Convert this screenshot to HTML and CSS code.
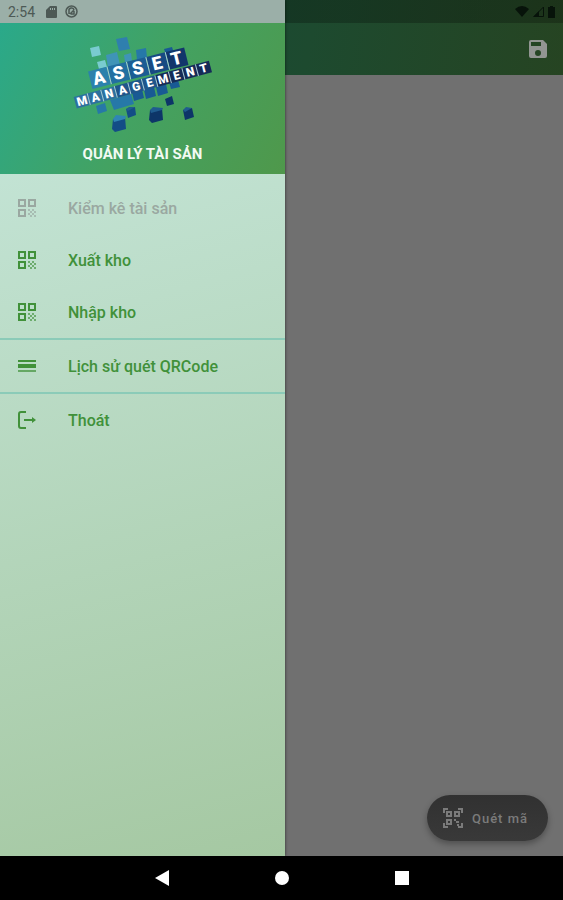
FILE: index.html
```html
<!DOCTYPE html>
<html lang="vi">
<head>
    <meta charset="UTF-8"/>
    <meta name="viewport" content="width=device-width, initial-scale=1.0"/>
    <title>Quản lý tài sản</title>
    <link rel="stylesheet" href="styles.css">
</head>
<body>
<!-- shared icons -->
<svg class="defs" width="0" height="0" aria-hidden="true">
    <symbol id="qr" viewBox="0 0 18 18">
        <g fill="none" stroke="currentColor" stroke-width="2">
            <rect x="1" y="1" width="6" height="6"/>
            <rect x="11" y="1" width="6" height="6"/>
            <rect x="1" y="11" width="6" height="6"/>
        </g>
        <path opacity=".65" fill="currentColor" d="M10 10h2v2h-2zM14 10h2v2h-2zM12 12h2v2h-2zM16 12h2v2h-2zM10 14h2v2h-2zM14 14h2v2h-2zM12 16h2v2h-2zM16 16h2v2h-2z"/>
    </symbol>
</svg>

<div class="stage">
    <!-- page behind the drawer -->
    <main class="page">
        <header class="app-bar">
            <button class="save" aria-label="Lưu">
                <svg width="18" height="18" viewBox="0 0 18 18">
                    <path fill="currentColor" fill-rule="evenodd" d="M2 0h12l4 4v12a2 2 0 0 1-2 2H2a2 2 0 0 1-2-2V2a2 2 0 0 1 2-2zM2 2v4h10V2zM9 10a3 3 0 1 0 0 6a3 3 0 0 0 0-6z"/>
                </svg>
            </button>
        </header>
        <button class="scan">
            <svg width="20" height="20" viewBox="0 0 20 20" fill="none" stroke="currentColor" stroke-width="2">
                <path d="M1 5V1h4M15 1h4v4M1 15v4h4M15 19h4v-4"/>
                <path d="M4 4h4v4H4zM12 4h4v4h-4zM4 12h4v4H4z"/>
                <path d="M11 12h2M13 14h3M15 16v2"/>
            </svg>
            Quét mã
        </button>
    </main>

    <!-- drawer -->
    <aside class="drawer">
        <div class="drawer-header">
            <svg class="logo" width="136" height="100" viewBox="0 0 136 100" aria-label="Asset Management">
                <g fill="#79cbd0">
                    <path d="M15 13l9-2 2 9-9 2z"/>
                    <path d="M22 27l8-2 2 7-8 2z"/>
                </g>
                <g fill="#3f94b7">
                    <path d="M31 20l11-3 3 13-12 3z"/>
                    <path fill="#2f7fae" d="M41 4l11-2 3 12-11 2z"/>
                    <path d="M49 20l7-2 1 8-7 1z"/>
                </g>
                <path fill="#2678a8" d="M61 15l10-2 1 10-10 2zM21 71l9-3 2 8-9 3zM35 65l21-6 3 10-20 6z"/>
                <path fill="#185a94" d="M57 57l10-3 2 9-10 3zM69 55l10-3 2 9-10 3zM81 52l10-3 2 9-10 3zM94 47l9-2 2 7-9 2zM89 14l8-2 2 6-8 2z"/>
                <path fill="#134d86" d="M38 84l12-2 1 12-11 3-3-3zM51 74l9-2 1 8-8 3z"/>
                <path fill="#0d3568" d="M75 75l12-2 1 12-11 3-3-3zM90 64l7-3 2 8-7 2zM108 75l9-2 2 9-9 3z"/>
                <path fill="#2f86b4" d="M38 84l3-4 10 1-1 3-11 3z"/>
                <path fill="#1f5c8f" d="M75 75l3-3 10 1-1 2-11 3zM51 74l3-2 6 0-7 4zM108 75l3-3 6 1-7 4z"/>
                <g transform="rotate(-14 24 43)">
                    <path fill="#2b81ac" d="M15 34h19v18H15z"/>
                    <path fill="#226fa1" d="M35 34h19v18H35z"/>
                    <path fill="#1c5d94" d="M55 34h19v18H55z"/>
                    <path fill="#184a83" d="M75 34h19v18H75z"/>
                    <path fill="#12366b" d="M95 34h19v18H95z"/>
                    <path stroke="#a7cad5" d="M34.500 34v18M54.500 34v18M74.500 34v18M94.500 34v18"/>
                    <g class="logo-top">
                        <text x="24" y="49">A</text>
                        <text x="44" y="49">S</text>
                        <text x="64" y="49">S</text>
                        <text x="84" y="49">E</text>
                        <text x="104" y="49">T</text>
                    </g>
                </g>
                <g transform="rotate(-15 7 66)">
                    <path fill="#2c719f" d="M0 60h42v12H0z"/>
                    <path fill="#1f568b" d="M42 60h42v12H42z"/>
                    <path fill="#152b57" d="M84 60h56v12H84z"/>
                    <path stroke="#a7cad5" d="M14 60v12M28 60v12M42 60v12M56 60v12M70 60v12M84 60v12M98 60v12M112 60v12M126 60v12"/>
                    <g class="logo-bottom">
                        <text x="7" y="70">M</text>
                        <text x="21" y="70">A</text>
                        <text x="35" y="70">N</text>
                        <text x="49" y="70">A</text>
                        <text x="63" y="70">G</text>
                        <text x="77" y="70">E</text>
                        <text x="91" y="70">M</text>
                        <text x="105" y="70">E</text>
                        <text x="119" y="70">N</text>
                        <text x="133" y="70">T</text>
                    </g>
                </g>
            </svg>
            <div class="drawer-title">QUẢN LÝ TÀI SẢN</div>
        </div>
        <nav class="menu">
            <a class="item current" href="#kiem-ke"><svg class="icon"><use href="#qr"/></svg>Kiểm kê tài sản</a>
            <a class="item" href="#xuat-kho"><svg class="icon"><use href="#qr"/></svg>Xuất kho</a>
            <a class="item" href="#nhap-kho"><svg class="icon"><use href="#qr"/></svg>Nhập kho</a>
            <a class="item line" href="#lich-su">
                <svg class="icon" viewBox="0 0 18 18" fill="currentColor">
                    <path d="M0 3h18v2H0zM0 7h18v4H0z"/>
                    <path opacity=".7" d="M0 13h18v2H0z"/>
                </svg>
                Lịch sử quét QRCode
            </a>
            <a class="item line" href="#thoat">
                <svg class="icon" viewBox="0 0 18 18" fill="none" stroke="currentColor" stroke-width="2">
                    <path d="M8 1H3a2 2 0 0 0-2 2v12a2 2 0 0 0 2 2h5"/>
                    <path d="M6 9h9"/>
                    <path fill="currentColor" stroke="none" d="M14 6l4 3-4 3z"/>
                </svg>
                Thoát
            </a>
        </nav>
    </aside>

    <!-- status bar, lies over the page and the drawer -->
    <div class="status">
        <span class="time">2:54</span>
        <svg width="11" height="12" viewBox="0 0 11 12">
            <path fill="currentColor" fill-rule="evenodd" d="M4 0h6a1 1 0 0 1 1 1v10a1 1 0 0 1-1 1H1a1 1 0 0 1-1-1V4zM4 2v2h1V2zM6 2v2h1V2zM8 2v2h1V2z"/>
        </svg>
        <svg width="13" height="13" viewBox="0 0 13 13" fill="none" stroke="currentColor">
            <circle cx="6.500" cy="6.500" r="5.500" stroke-width="1.500"/>
            <path stroke-width="1.500" d="M4 9V6a2.500 2.500 0 0 1 5-1M5 9l4-4M6 9h3V6"/>
        </svg>
        <div class="signals">
            <svg width="14" height="11" viewBox="0 0 14 11"><path fill="currentColor" d="M0 3q7-6 14 0L7 11z"/></svg>
            <svg width="11" height="11" viewBox="0 0 11 11"><path fill="none" stroke="currentColor" d="M1 10.500L10.500 1v9.500z"/><path fill="currentColor" d="M0 11l6-6v6z"/></svg>
            <svg width="7" height="12" viewBox="0 0 7 12"><path fill="currentColor" d="M2 0h3v1h2v11H0V1h2z"/></svg>
        </div>
    </div>
</div>

<!-- system navigation -->
<footer class="nav-bar">
    <button aria-label="Back"><svg width="16" height="16" viewBox="0 0 16 16"><path fill="#fff" d="M1 8l14-8v16z"/></svg></button>
    <button aria-label="Home"><svg width="16" height="16" viewBox="0 0 16 16"><circle fill="#fff" cx="8" cy="8" r="7"/></svg></button>
    <button aria-label="Recent"><svg width="16" height="16" viewBox="0 0 16 16"><path fill="#fff" d="M1 1h14v14H1z"/></svg></button>
</footer>
</body>
</html>
```
FILE: styles.css
```css
* {
    box-sizing: border-box;
}

body {
    font-family: Roboto, "Noto Sans", sans-serif;
    margin: 0;
    min-height: 100vh;
    display: flex;
    flex-direction: column;
    background-color: #000;
}

button {
    border: none;
    padding: 0;
    background: none;
    font: inherit;
    cursor: pointer;
}

svg {
    display: block;
    flex-shrink: 0;
}

.defs {
    position: absolute;
}

/* page and drawer share one grid cell */
.stage {
    position: relative;
    flex: 1;
    display: grid;
}

.page,
.drawer {
    grid-area: 1 / 1;
}

.page {
    display: flex;
    flex-direction: column;
    justify-content: space-between;
    background-color: #707070;
}

.app-bar {
    height: 75px;
    padding: 23px 16px 0;
    display: flex;
    align-items: center;
    justify-content: flex-end;
    background: linear-gradient(rgba(0, 0, 0, 0.25), rgba(0, 0, 0, 0.25)) 0 0 / 100% 23px no-repeat,
        linear-gradient(100deg, #134a3d, #1d4a2f 55%, #264422);
}

.save {
    color: #929592;
}

.scan {
    align-self: flex-end;
    height: 46px;
    margin: 0 15px 15px;
    padding: 0 20px 0 16px;
    display: flex;
    align-items: center;
    gap: 9px;
    border-radius: 23px;
    background: linear-gradient(#313131, #393939);
    box-shadow: 0 3px 6px rgba(0, 0, 0, 0.3);
    color: #7b7b7b;
    font-size: 13px;
    font-weight: 500;
    letter-spacing: 1px;
}

.drawer {
    width: 285px;
    max-width: 85%;
    padding-top: 23px;
    background: linear-gradient(165deg, #c9e9df, #a5c8a2);
    box-shadow: 0 0 3px rgba(0, 0, 0, 0.6);
}

.drawer-header {
    height: 151px;
    padding-top: 12px;
    display: flex;
    flex-direction: column;
    align-items: center;
    background: linear-gradient(118deg, #2aa98a, #43a262 50%, #4f984b);
}

.logo {
    overflow: visible;
}

.logo-top,
.logo-bottom {
    fill: #fff;
    font-weight: 900;
    text-anchor: middle;
}

.logo-top {
    font-size: 18px;
}

.logo-bottom {
    font-size: 12px;
}

.drawer-title {
    margin-top: 9px;
    color: #f2faf2;
    font-size: 15px;
    font-weight: 700;
    line-height: 20px;
}

.menu {
    padding-top: 8px;
}

.item {
    height: 52px;
    padding: 0 18px;
    display: flex;
    align-items: center;
    gap: 32px;
    color: #41913a;
    font-size: 16px;
    font-weight: 500;
    text-decoration: none;
}

.item.line {
    height: 54px;
    border-top: 2px solid #8bcbb8;
}

.item.current {
    color: #9aa8a1;
}

.icon {
    width: 18px;
    height: 18px;
}

.status {
    position: absolute;
    inset: 0 0 auto;
    height: 23px;
    padding: 0 8px;
    display: flex;
    align-items: center;
    gap: 8px;
    color: #4d5955;
    background: linear-gradient(#9bafa8, #9bafa8) 0 0 / 285px 100% no-repeat;
}

.time {
    margin-right: 3px;
    font-size: 14px;
}

.signals {
    margin-left: auto;
    display: flex;
    align-items: center;
    gap: 4px;
    color: #07130a;
}

.nav-bar {
    height: 44px;
    display: flex;
    align-items: center;
    justify-content: center;
    gap: 104px;
}
```
